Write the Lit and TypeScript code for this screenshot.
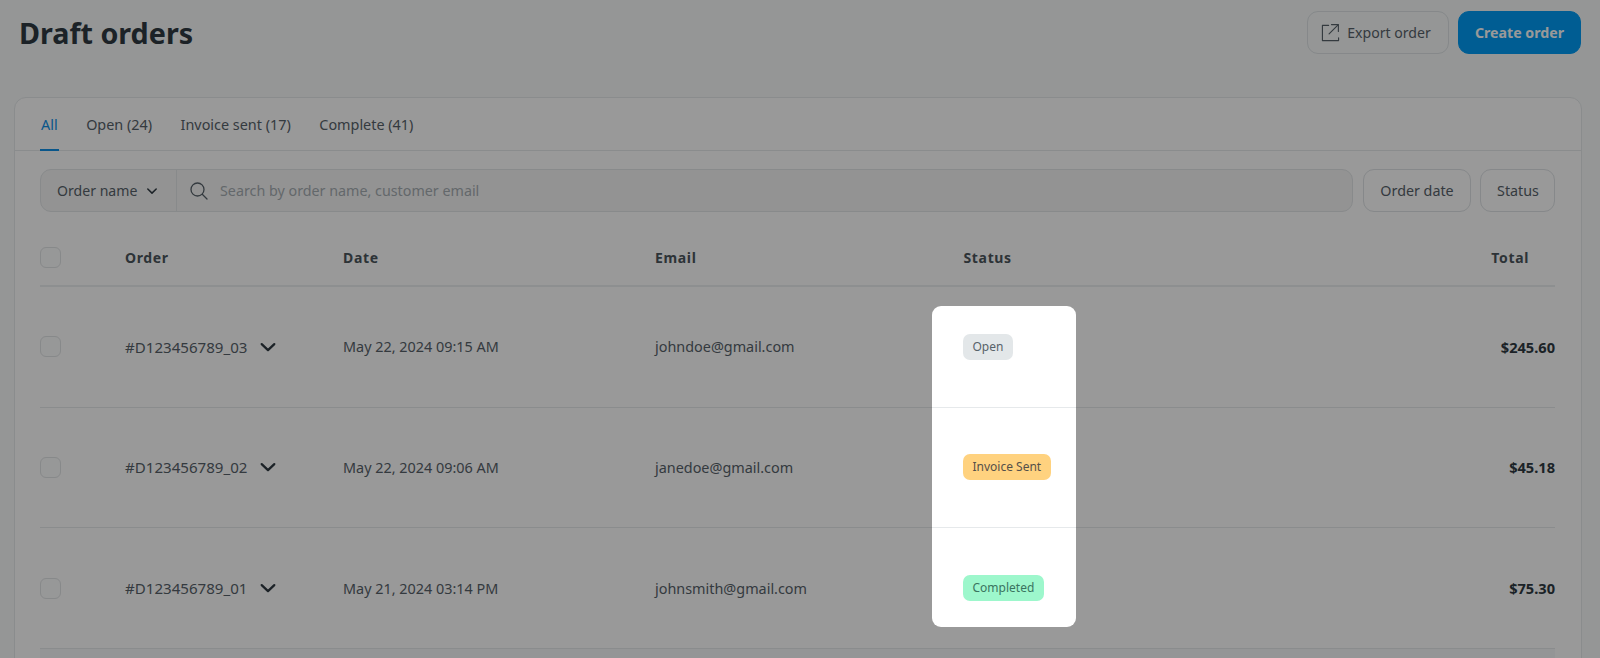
import { LitElement, html, css } from "lit";
import { customElement } from "lit/decorators.js";

const chevron = (sw: number) => html`<svg viewBox="0 0 16 16" fill="none" stroke="currentColor" stroke-width=${sw} stroke-linecap="round" stroke-linejoin="round"><path d="M2.4 5.4 8 10.8 13.6 5.4"/></svg>`;

type Row = { id: string; date: string; email: string; status: string; cls: string; total: string };
const rows: Row[] = [
  { id: "#D123456789_03", date: "May 22, 2024 09:15 AM", email: "johndoe@gmail.com", status: "Open", cls: "open", total: "$245.60" },
  { id: "#D123456789_02", date: "May 22, 2024 09:06 AM", email: "janedoe@gmail.com", status: "Invoice Sent", cls: "sent", total: "$45.18" },
  { id: "#D123456789_01", date: "May 21, 2024 03:14 PM", email: "johnsmith@gmail.com", status: "Completed", cls: "done", total: "$75.30" },
];

@customElement("app-root")
export class AppRoot extends LitElement {
  static styles = css`
    :host {
      display: block;
      position: relative;
      height: 658px;
      overflow: hidden;
      background: #f8fbfb;
      font-family: "Noto Sans", "Open Sans", sans-serif;
      color: #58626a;
      font-size: 14.3px;
    }
    .top {
      display: flex;
      justify-content: space-between;
      align-items: center;
      padding: 11px 19px 0 19px;
      height: 43px;
    }
    h1 {
      margin: 0;
      font-size: 28.7px;
      font-weight: 700;
      color: #2f3a42;
      line-height: 43px;
    }
    .actions { display: flex; gap: 9px; }
    .btn {
      box-sizing: border-box;
      height: 43px;
      border: 1px solid #dfe3e6;
      border-radius: 11px;
      display: flex;
      align-items: center;
      justify-content: center;
      color: #58626a;
      font-size: 14.1px;
    }
    .export { width: 142px; gap: 7px; padding-right: 4px; }
    .export svg { width: 19px; height: 19px; color: #58626a; }
    .create {
      width: 123px;
      background: #009cf5;
      border-color: #009cf5;
      color: #fff;
      font-weight: 700;
      font-size: 14.2px;
    }
    .card {
      margin: 43px 18px 0 14px;
      height: 600px;
      background: #fff;
      border: 1px solid #e6e9eb;
      border-radius: 12px;
      box-sizing: border-box;
    }
    .tabs {
      display: flex;
      gap: 26.5px;
      height: 52px;
      padding-left: 25px;
      border-bottom: 1px solid #e6e9eb;
      font-size: 14.4px;
    }
    .tab {
      padding: 18px 1px 0;
      height: 34px;
      line-height: 18px;
      color: #58626a;
    }
    .tab.active {
      color: #0f8fe6;
      box-shadow: inset 0 -2px 0 #0f8fe6;
      height: 35px;
    }
    .filters {
      display: flex;
      gap: 9.5px;
      margin: 18px 26px 0 25px;
      height: 43px;
    }
    .search {
      flex: 1;
      display: flex;
      align-items: center;
      border: 1px solid #e3e6e8;
      border-radius: 11px;
      background: #f5f6f6;
      box-sizing: border-box;
    }
    .select {
      width: 136px;
      height: 100%;
      display: flex;
      align-items: center;
      gap: 9px;
      padding-left: 16px;
      border-right: 1px solid #e3e6e8;
      box-sizing: border-box;
      font-size: 14.1px;
    }
    .select svg { width: 12px; height: 12px; color: #2f3a42; }
    .search svg.mag { width: 20px; height: 20px; margin-left: 12px; color: #58626a; }
    .search span.ph { margin-left: 11px; color: #a6adb2; }
    .fbtn {
      box-sizing: border-box;
      border: 1px solid #dfe3e6;
      border-radius: 11px;
      display: flex;
      align-items: center;
      justify-content: center;
      padding-left: 1px;
    }
    .fdate { width: 108px; }
    .fstatus { width: 75px; }
    .table { margin: 0 26px 0 25px; }
    .row {
      display: grid;
      grid-template-columns: 85px 218px 312px 308.5px 1fr;
      align-items: center;
      border-bottom: 1px solid #e6e9eb;
      box-sizing: border-box;
      height: 120.67px;
      font-size: 14.4px;
    }
    .row.head {
      height: 75px;
      padding-top: 18px;
      font-weight: 700;
      letter-spacing: 0.65px;
      color: #4c565d;
      font-size: 14px;
      border-bottom-width: 2px;
      border-bottom-color: #eceef0;
    }
    .box {
      width: 21px;
      height: 21px;
      box-sizing: border-box;
      border: 1px solid #e1e4e6;
      border-radius: 6px;
      background: #fcfdfd;
    }
    .row.head .box { margin-top: -1px; }
    .oid {
      display: flex;
      align-items: center;
      gap: 12px;
      font-size: 15.1px;
    }
    .oid svg { width: 18px; height: 18px; color: #2f3a42; }
    .last { display: flex; justify-content: space-between; align-items: center; }
    .head .last { padding-right: 26px; }
    .total { font-weight: 700; color: #2f3a42; font-size: 14.6px; }
    .badge {
      display: inline-block;
      padding: 0 9.5px;
      margin-left: -0.5px;
      height: 26px;
      line-height: 26px;
      border-radius: 7px;
      font-size: 12px;
      color: #58626a;
    }
    .open { background: #e3e7e9; }
    .sent { background: #ffd27f; color: #54504a; }
    .done { background: #9df7cc; color: #3a7460; }
    .foot { height: 20px; background: #f7f9fa; }
    .spot {
      position: absolute;
      left: 932px;
      top: 306px;
      width: 144px;
      height: 321px;
      border-radius: 9px;
      box-shadow: 0 0 0 2000px rgba(0, 0, 0, 0.4);
      pointer-events: none;
    }
  `;

  render() {
    return html`
      <div class="top">
        <h1>Draft orders</h1>
        <div class="actions">
          <div class="btn export">
            <svg viewBox="0 0 20 20" fill="none" stroke="currentColor" stroke-width="1.2" stroke-linecap="round" stroke-linejoin="round">
              <path d="M8 2.5H1.5v16h17V15.5"/><path d="M8.5 11.5 18 2"/><path d="M11 1.7h7.3V9"/>
            </svg>
            <span>Export order</span>
          </div>
          <div class="btn create">Create order</div>
        </div>
      </div>
      <div class="card">
        <div class="tabs">
          <div class="tab active">All</div>
          <div class="tab">Open (24)</div>
          <div class="tab">Invoice sent (17)</div>
          <div class="tab">Complete (41)</div>
        </div>
        <div class="filters">
          <div class="search">
            <div class="select"><span>Order name</span>${chevron(2)}</div>
            <svg class="mag" viewBox="0 0 20 20" fill="none" stroke="currentColor" stroke-width="1.3" stroke-linecap="round"><circle cx="8.5" cy="8.5" r="6.5"/><path d="M13.5 13.5 18 18"/></svg>
            <span class="ph">Search by order name, customer email</span>
          </div>
          <div class="fbtn fdate">Order date</div>
          <div class="fbtn fstatus">Status</div>
        </div>
        <div class="table">
          <div class="row head">
            <div class="box"></div>
            <div>Order</div>
            <div>Date</div>
            <div>Email</div>
            <div class="last"><span>Status</span><span>Total</span></div>
          </div>
          ${rows.map((r) => html`
            <div class="row">
              <div class="box"></div>
              <div class="oid"><span>${r.id}</span>${chevron(2)}</div>
              <div>${r.date}</div>
              <div>${r.email}</div>
              <div class="last">
                <span class="badge ${r.cls}">${r.status}</span>
                <span class="total">${r.total}</span>
              </div>
            </div>`)}
          <div class="foot"></div>
        </div>
      </div>
      <div class="spot"></div>
    `;
  }
}
